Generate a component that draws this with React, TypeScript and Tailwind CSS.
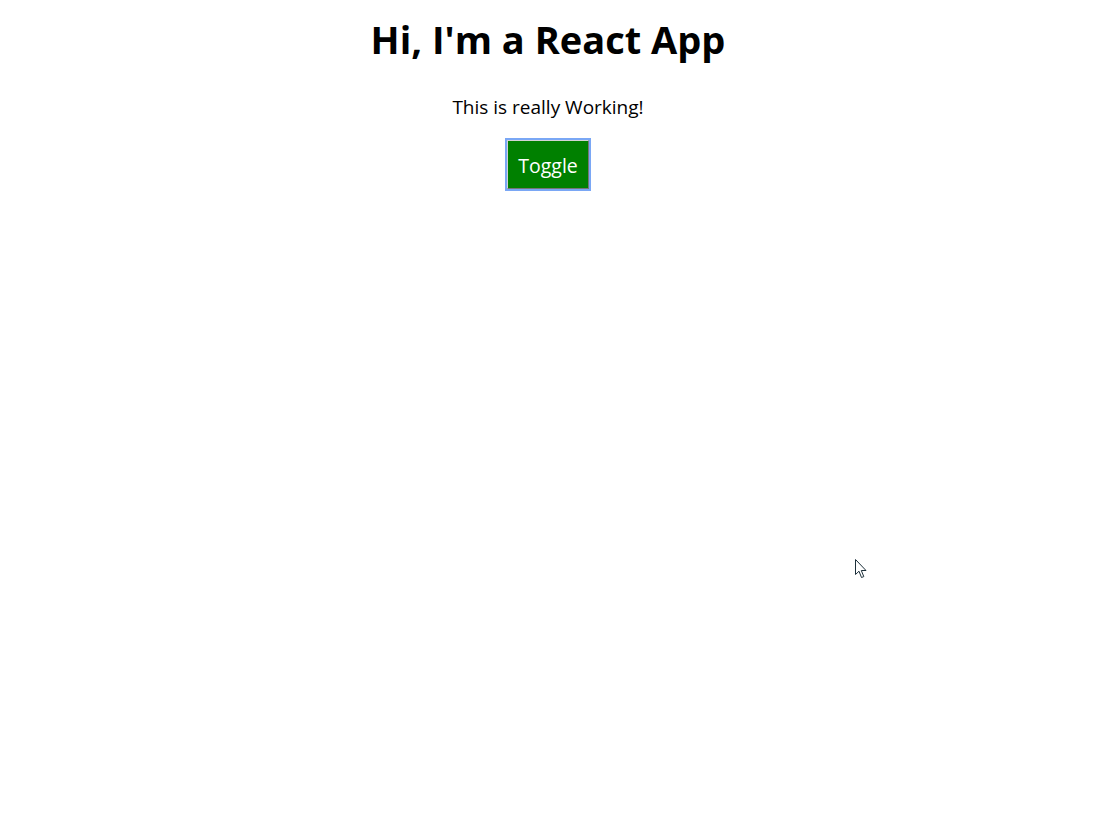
import { useState } from "react";

const font = { fontFamily: '"Open Sans", "Noto Sans", sans-serif' };

export default function App() {
  const [show, setShow] = useState(true);

  return (
    <div className="relative min-h-[824px] bg-white pr-[9px] text-center text-black" style={font}>
      <h1 className="pt-[12px] text-[38px] font-bold leading-[54px]">
        Hi, I'm a React App
      </h1>
      {show ? (
        <p className="mt-[29px] text-[19px] leading-[24px]">This is really Working!</p>
      ) : null}
      <button
        type="button"
        onClick={() => setShow((v) => !v)}
        className="mt-[20px] h-[51px] w-[84px] border-2 border-t-[#d4d4d4] border-l-[#d4d4d4] border-r-[#767676] border-b-[#767676] bg-[#008000] pt-[2px] text-[19.5px] text-white outline outline-2 outline-[#7aa7f5] -outline-offset-1"
      >
        Toggle
      </button>

      <svg
        aria-hidden
        className="absolute left-[855px] top-[559px]"
        width="13"
        height="20"
        viewBox="0 0 13 20"
      >
        <path
          d="M0.5 0.5 L0.5 15.5 L4 12.2 L6.5 18.5 L8.8 17.6 L6.3 11.5 L11 11.5 Z"
          fill="#fff"
          stroke="#1c2f3a"
          strokeWidth="1"
        />
      </svg>
    </div>
  );
}
